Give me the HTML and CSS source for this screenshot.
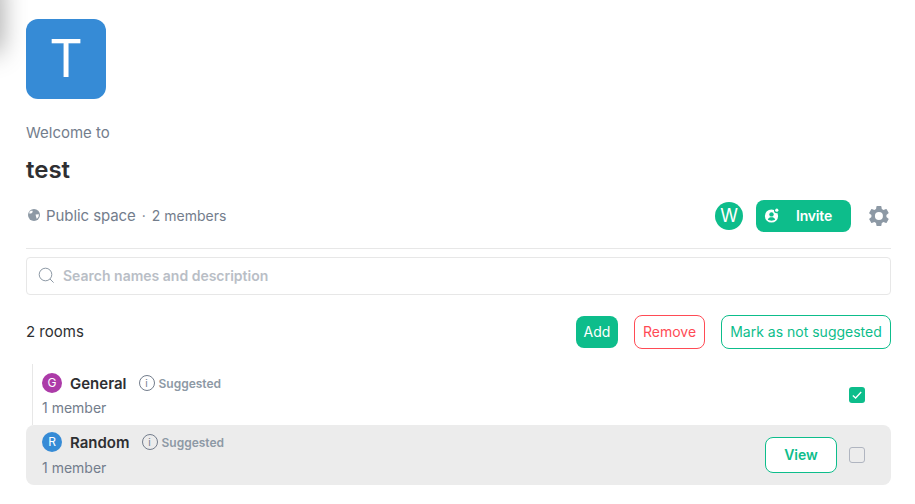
FILE: index.html
```html
<!DOCTYPE html>
<html>
    <head>
        <title>test</title>
        <link rel="stylesheet" href="styles.css">
    </head>
    <body>
        <div class="side-shadow"></div>

        <div class="space">
            <div class="space-avatar">T</div>
            <div class="welcome">Welcome to</div>
            <h1 class="space-name">test</h1>

            <div class="space-info">
                <div class="space-meta">
                    <svg class="globe" width="12" height="12" viewBox="0 0 12 12">
                        <circle cx="6" cy="6" r="6" fill="#8d99a5"/>
                        <path d="M1.6 2.6 L4.2 1.4 L4.8 3 L3.2 4.6 L1.2 4.4 Z M7.6 5.4 L10.9 5.2 L10.6 7.8 L8.8 10 L8 7.6 Z" fill="#fff"/>
                    </svg>
                    <span class="public">Public space</span>
                    <span class="dot">·</span>
                    <span class="members">2 members</span>
                </div>
                <div class="space-actions">
                    <div class="member-avatar">W</div>
                    <div class="btn btn-invite">
                        <svg width="16" height="16" viewBox="0 0 16 16">
                            <circle cx="7.5" cy="9" r="6.6" fill="#fff"/>
                            <circle cx="7.5" cy="7.4" r="2.2" fill="#0dbd8b"/>
                            <path d="M3.8 12.8 C4.4 10.8 5.8 10.3 7.5 10.3 C9.2 10.3 10.6 10.8 11.2 12.8 C9.4 13.9 5.6 13.9 3.8 12.8 Z" fill="#0dbd8b"/>
                            <circle cx="12.6" cy="3.6" r="2.6" fill="#0dbd8b"/>
                            <circle cx="12.8" cy="3.2" r="1.6" fill="#fff"/>
                        </svg>
                        <span>Invite</span>
                    </div>
                    <svg class="gear" width="24" height="24" viewBox="0 0 24 24">
                        <path fill="#8d99a5" fill-rule="evenodd" d="M19.4 13c.04-.33.06-.66.06-1s-.02-.67-.07-1l2.11-1.65a.5.5 0 0 0 .12-.64l-2-3.46a.5.5 0 0 0-.61-.22l-2.49 1a7.3 7.3 0 0 0-1.73-1l-.38-2.65A.49.49 0 0 0 13.92 2h-4a.49.49 0 0 0-.49.42l-.38 2.65c-.62.26-1.2.59-1.73 1l-2.49-1a.5.5 0 0 0-.61.22l-2 3.46a.5.5 0 0 0 .12.64L4.45 11c-.05.33-.08.67-.08 1s.03.67.07 1l-2.11 1.65a.5.5 0 0 0-.12.64l2 3.46c.12.22.39.3.61.22l2.49-1c.53.4 1.11.74 1.73 1l.38 2.65c.04.24.25.42.49.42h4c.24 0 .45-.18.49-.42l.38-2.65c.62-.26 1.2-.6 1.73-1l2.49 1c.22.08.49 0 .61-.22l2-3.46a.5.5 0 0 0-.12-.64L19.4 13zM11.92 16a4 4 0 1 1 0-8 4 4 0 0 1 0 8z"/>
                    </svg>
                </div>
            </div>

            <div class="search">
                <svg width="17" height="17" viewBox="0 0 17 17">
                    <circle cx="7.5" cy="7.5" r="6.3" fill="none" stroke="#8d99a5" stroke-width="1"/>
                    <path d="M12 12 L15.6 15.6" stroke="#8d99a5" stroke-width="1"/>
                </svg>
                <span>Search names and description</span>
            </div>

            <div class="rooms-header">
                <span class="rooms-count">2 rooms</span>
                <div class="rooms-actions">
                    <div class="btn btn-add">Add</div>
                    <div class="btn btn-remove">Remove</div>
                    <div class="btn btn-mark">Mark as not suggested</div>
                </div>
            </div>

            <div class="rooms">
                <div class="room room-first">
                    <div class="room-main">
                        <div class="room-title">
                            <div class="room-avatar purple">G</div>
                            <span class="room-name">General</span>
                            <span class="info-icon">i</span>
                            <span class="suggested">Suggested</span>
                        </div>
                        <div class="room-sub">1 member</div>
                    </div>
                    <div class="checkbox checked">
                        <svg width="12" height="12" viewBox="0 0 12 12">
                            <path d="M1.8 6.4 L4.6 9 L10.2 3" fill="none" stroke="#fff" stroke-width="1.3"/>
                        </svg>
                    </div>
                </div>
                <div class="room room-hover">
                    <div class="room-main">
                        <div class="room-title">
                            <div class="room-avatar blue">R</div>
                            <span class="room-name">Random</span>
                            <span class="info-icon">i</span>
                            <span class="suggested">Suggested</span>
                        </div>
                        <div class="room-sub">1 member</div>
                    </div>
                    <div class="btn btn-view">View</div>
                    <div class="checkbox"></div>
                </div>
            </div>
        </div>
    </body>
</html>
```

FILE: styles.css
```css
html, body {
    height: 100%;
}

body {
    margin: 0;
    overflow: hidden;
    background-color: #fff;
    font-family: Inter, "Liberation Sans", sans-serif;
    color: #2e2f32;
}

.side-shadow {
    position: absolute;
    left: -20px;
    top: -20px;
    width: 20px;
    height: 72px;
    box-shadow: 0 0 26px rgba(0,0,0,0.42);
}

.space {
    padding: 19px 24px 0 26px;
}

.space-avatar {
    width: 80px;
    height: 80px;
    border-radius: 12px;
    background-color: #368bd6;
    color: #fff;
    font-size: 52px;
    line-height: 80px;
    text-align: center;
}

.welcome {
    margin-top: 25px;
    font-size: 15px;
    line-height: 18px;
    color: #737d8c;
}

.space-name {
    margin: 13px 0 0 0;
    font-size: 24px;
    line-height: 29px;
    font-weight: 600;
}

.space-info {
    display: flex;
    justify-content: space-between;
    align-items: center;
    margin-top: 16px;
    padding-bottom: 16px;
    border-bottom: 1px solid #e7e7e7;
}

.space-meta {
    display: flex;
    align-items: center;
    padding-left: 2px;
    padding-bottom: 2px;
    font-size: 14px;
    color: #737d8c;
}

.globe {
    margin-right: 6px;
}

.public {
    font-size: 15px;
    letter-spacing: -0.08px;
}

.dot {
    margin: 0 6px;
}

.space-actions {
    display: flex;
    align-items: center;
}

.member-avatar {
    width: 28px;
    height: 28px;
    border-radius: 50%;
    background-color: #0dbd8b;
    color: #fff;
    font-size: 18px;
    line-height: 28px;
    text-align: center;
}

.btn {
    box-sizing: border-box;
    display: flex;
    align-items: center;
    justify-content: center;
    padding-bottom: 2px;
    border-radius: 8px;
    font-size: 14px;
    white-space: nowrap;
}

.btn-invite {
    justify-content: flex-start;
    width: 95px;
    height: 32px;
    margin-left: 13px;
    gap: 16px;
    padding-left: 8px;
    background-color: #0dbd8b;
    color: #fff;
    font-weight: 600;
    letter-spacing: -0.2px;
}

.gear {
    margin-left: 16px;
}

.search {
    box-sizing: border-box;
    display: flex;
    align-items: center;
    gap: 8px;
    height: 38px;
    margin-top: 8px;
    padding-left: 11px;
    padding-bottom: 2px;
    border: 1px solid #e7e7e7;
    border-radius: 4px;
    font-size: 14px;
    font-weight: 600;
    color: #b9bec6;
}

.rooms-header {
    display: flex;
    justify-content: space-between;
    align-items: center;
    margin-top: 20px;
}

.rooms-count {
    margin-bottom: 2px;
    font-size: 15px;
}

.rooms-actions {
    display: flex;
    align-items: center;
    gap: 16px;
}

.btn-add {
    width: 42px;
    height: 32px;
    background-color: #0dbd8b;
    color: #fff;
}

.btn-remove {
    width: 71px;
    height: 34px;
    border: 1px solid #ff4b55;
    color: #ff4b55;
}

.btn-mark {
    width: 170px;
    height: 34px;
    border: 1px solid #0dbd8b;
    color: #0dbd8b;
}

.rooms {
    margin-top: 15px;
}

.room {
    box-sizing: border-box;
    display: flex;
    align-items: center;
    height: 60px;
    padding: 0 26px 0 16px;
}

.room-first {
    height: 61px;
    margin-left: 6px;
    padding-left: 9px;
    border-left: 1px solid #e7e7e7;
}

.room-first .room-sub {
    margin-top: 6px;
}

.room-first .checkbox {
    margin-top: 1px;
}

.room-hover {
    border-radius: 8px;
    background-color: #ececec;
}

.room-main {
    flex: 1;
}

.room-hover .room-main {
    margin-bottom: 2px;
}

.room-title {
    display: flex;
    align-items: center;
    height: 20px;
}

.room-avatar {
    width: 20px;
    height: 20px;
    border-radius: 50%;
    color: #fff;
    font-size: 12px;
    line-height: 20px;
    text-align: center;
}

.purple {
    background-color: #ac3ba8;
}

.blue {
    background-color: #368bd6;
}

.room-name {
    margin-left: 8px;
    font-size: 15px;
    font-weight: 600;
}

.info-icon {
    box-sizing: border-box;
    width: 16px;
    height: 16px;
    margin-left: 12px;
    border: 1px solid #737d8c;
    border-radius: 50%;
    font-size: 10px;
    line-height: 14px;
    text-align: center;
    color: #737d8c;
}

.suggested {
    margin-left: 4px;
    font-size: 12px;
    font-weight: 600;
    color: #8d99a5;
}

.room-sub {
    margin-top: 7px;
    font-size: 14px;
    line-height: 17px;
    color: #737d8c;
}

.btn-view {
    width: 72px;
    height: 36px;
    margin-right: 12px;
    border: 1px solid #0dbd8b;
    background-color: #fff;
    color: #0dbd8b;
    font-weight: 600;
}

.checkbox {
    box-sizing: border-box;
    display: flex;
    align-items: center;
    justify-content: center;
    width: 16px;
    height: 16px;
    border: 1px solid #b0b5c0;
    border-radius: 3px;
}

.checked {
    border: none;
    background-color: #0dbd8b;
}
```
